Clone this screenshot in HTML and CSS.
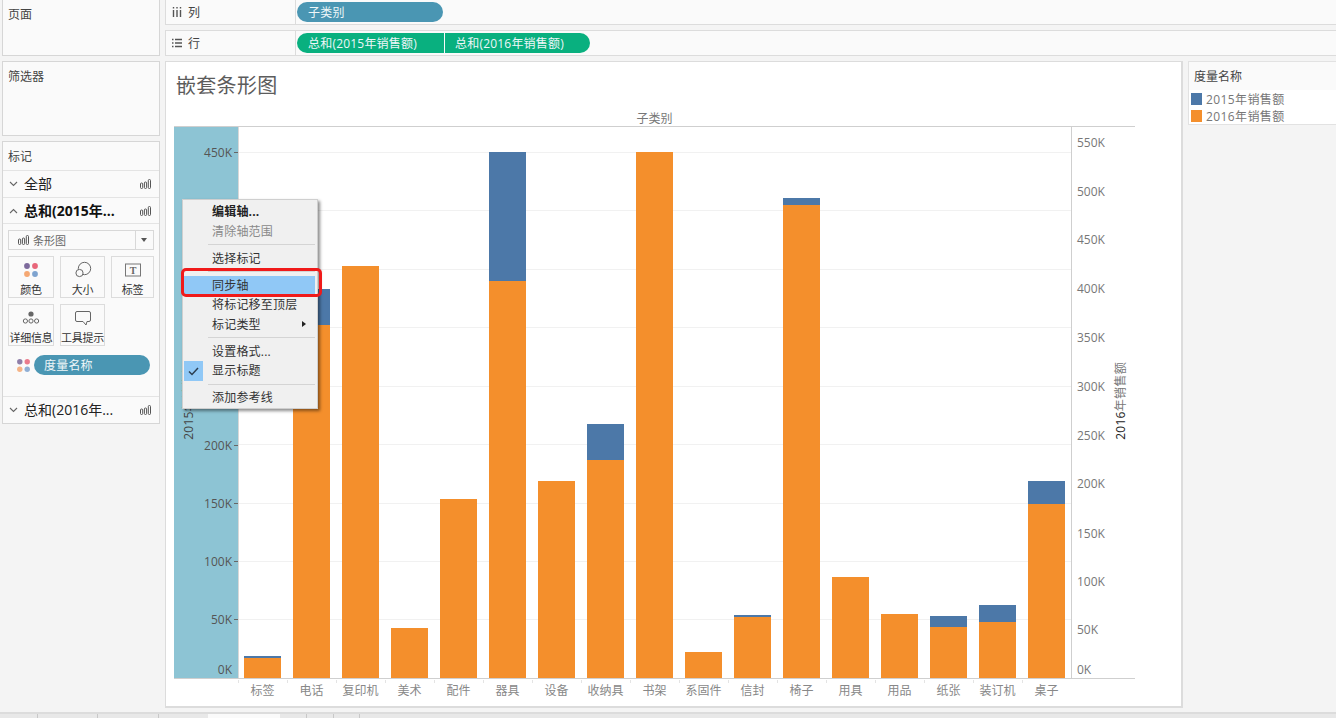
FILE: index.html
```html
<!DOCTYPE html>
<html lang="zh-CN">
<head>
<meta charset="utf-8">
<title>嵌套条形图</title>
<link rel="stylesheet" href="styles.css">
</head>
<body>
<svg class="defs" width="0" height="0" aria-hidden="true">
  <symbol id="mini-bars" viewBox="0 0 11 10">
    <rect x="0.5" y="4" width="2.2" height="5.500" rx="1" fill="none" stroke="#555"/>
    <rect x="4.4" y="3" width="2.2" height="6.500" rx="1" fill="none" stroke="#555"/>
    <rect x="8.300" y="0.500" width="2.200" height="9" rx="1" fill="none" stroke="#555"/>
  </symbol>
  <symbol id="dots" viewBox="0 0 14 14">
    <circle cx="3" cy="3" r="2.9" fill="#7d6a9c"/>
    <circle cx="11" cy="3" r="2.9" fill="#e8667a"/>
    <circle cx="3" cy="11" r="2.9" fill="#f5a873"/>
    <circle cx="11" cy="11" r="2.9" fill="#7ea3cf"/>
  </symbol>
  <symbol id="chev-down" viewBox="0 0 9 6"><path d="M1 1l3.500 3.500L8 1" fill="none" stroke="#666" stroke-width="1.100"/></symbol>
  <symbol id="chev-up" viewBox="0 0 9 6"><path d="M1 5l3.500-3.500L8 5" fill="none" stroke="#666" stroke-width="1.100"/></symbol>
</svg>

<div class="app">
  <div class="workspace">
    <aside class="sidebar">
      <section class="card card-pages"><h2 class="card-title">页面</h2></section>
      <section class="card card-filters"><h2 class="card-title">筛选器</h2></section>
      <section class="card card-marks">
        <h2 class="marks-title">标记</h2>
        <div class="marks-row">
          <svg class="chev"><use href="#chev-down"/></svg><span class="marks-name">全部</span>
          <svg class="mini"><use href="#mini-bars"/></svg>
        </div>
        <div class="marks-row marks-row-short">
          <svg class="chev"><use href="#chev-up"/></svg><span class="marks-name strong">总和(2015年...</span>
          <svg class="mini"><use href="#mini-bars"/></svg>
        </div>
        <div class="marks-body">
          <div class="type-select">
            <svg class="mini"><use href="#mini-bars"/></svg>
            <span class="type-label">条形图</span>
            <span class="type-arrow"></span>
          </div>
          <div class="mark-buttons">
            <div class="mark-btn">
              <svg class="mark-icon dots-icon"><use href="#dots"/></svg><span>颜色</span>
            </div>
            <div class="mark-btn">
              <svg class="mark-icon" viewBox="0 0 18 18"><circle cx="10.500" cy="7.500" r="6.200" fill="none" stroke="#666"/><circle cx="5.500" cy="12" r="3.600" fill="#fafafa" stroke="#666"/></svg><span>大小</span>
            </div>
            <div class="mark-btn">
              <svg class="mark-icon" viewBox="0 0 18 18"><rect x="1.500" y="3" width="15" height="12" fill="none" stroke="#777"/><text x="9" y="12.600" class="icon-t">T</text></svg><span>标签</span>
            </div>
            <div class="mark-btn">
              <svg class="mark-icon" viewBox="0 0 18 18"><circle cx="9" cy="5" r="2.600" fill="#666"/><circle cx="3.400" cy="12" r="2.100" fill="none" stroke="#666"/><circle cx="9" cy="12" r="2.100" fill="none" stroke="#666"/><circle cx="14.600" cy="12" r="2.100" fill="none" stroke="#666"/></svg><span>详细信息</span>
            </div>
            <div class="mark-btn">
              <svg class="mark-icon" viewBox="0 0 18 18"><path d="M3 2.500h12a1.500 1.500 0 0 1 1.500 1.500v7a1.500 1.500 0 0 1-1.500 1.500h-2l-1 3.500-3-3.500H3A1.500 1.500 0 0 1 1.500 11V4A1.500 1.500 0 0 1 3 2.500z" fill="none" stroke="#666"/></svg><span>工具提示</span>
            </div>
          </div>
          <div class="field-row">
            <svg class="field-dots"><use href="#dots"/></svg>
            <span class="pill pill-blue pill-field">度量名称</span>
          </div>
        </div>
        <div class="marks-row marks-last">
          <svg class="chev"><use href="#chev-down"/></svg><span class="marks-name">总和(2016年...</span>
          <svg class="mini"><use href="#mini-bars"/></svg>
        </div>
      </section>
    </aside>

    <main class="content">
      <div class="shelf shelf-cols">
        <div class="shelf-label">
          <svg class="shelf-icon" viewBox="0 0 10 10"><path d="M1.500 0v1.500M1.500 3v7M5 0v1.500M5 3v7M8.500 0v1.500M8.500 3v7" stroke="#555" stroke-width="1.400" fill="none"/></svg>
          <span>列</span>
        </div>
        <div class="pills"><span class="pill pill-blue pill-sub">子类别</span></div>
      </div>
      <div class="shelf shelf-rows">
        <div class="shelf-label">
          <svg class="shelf-icon" viewBox="0 0 10 10"><path d="M0 1.500h1.500M3 1.500h7M0 5h1.500M3 5h7M0 8.500h1.500M3 8.500h7" stroke="#555" stroke-width="1.400" fill="none"/></svg>
          <span>行</span>
        </div>
        <div class="pills">
          <span class="pill pill-green pill-left">总和(2015年销售额)</span>
          <span class="pill pill-green pill-right">总和(2016年销售额)</span>
        </div>
      </div>

      <div class="lower">
        <section class="sheet">
          <h1 class="sheet-title">嵌套条形图</h1>
          <div class="chart">
            <div class="chart-header">子类别</div>
            <div class="plot-row">
              <div class="axis axis-left">
                <span class="axis-title axis-title-left">2015年销售额</span>
                <span class="tick-left" style="top:17px">450K</span>
                <span class="tick-left" style="top:310px">200K</span>
                <span class="tick-left" style="top:368px">150K</span>
                <span class="tick-left" style="top:426px">100K</span>
                <span class="tick-left" style="top:484px">50K</span>
                <span class="tick-left tick-zero" style="top:534px">0K</span>
              </div>
              <div class="plot">
                <i class="grid" style="top:25px"></i><i class="grid" style="top:83px"></i>
                <i class="grid" style="top:142px"></i><i class="grid" style="top:200px"></i>
                <i class="grid" style="top:259px"></i><i class="grid" style="top:317px"></i>
                <i class="grid" style="top:376px"></i><i class="grid" style="top:434px"></i>
                <i class="grid" style="top:492px"></i>
                <div class="bars">
                  <div class="col"><b class="seg-blue" style="height:2px"></b><b class="seg-orange" style="height:20px"></b></div>
                  <div class="col"><b class="seg-blue" style="height:36px"></b><b class="seg-orange" style="height:353px"></b></div>
                  <div class="col"><b class="seg-orange" style="height:412px"></b></div>
                  <div class="col"><b class="seg-orange" style="height:50px"></b></div>
                  <div class="col"><b class="seg-orange" style="height:179px"></b></div>
                  <div class="col"><b class="seg-blue" style="height:129px"></b><b class="seg-orange" style="height:397px"></b></div>
                  <div class="col"><b class="seg-orange" style="height:197px"></b></div>
                  <div class="col"><b class="seg-blue" style="height:36px"></b><b class="seg-orange" style="height:218px"></b></div>
                  <div class="col"><b class="seg-orange" style="height:526px"></b></div>
                  <div class="col"><b class="seg-orange" style="height:26px"></b></div>
                  <div class="col"><b class="seg-blue" style="height:2px"></b><b class="seg-orange" style="height:61px"></b></div>
                  <div class="col"><b class="seg-blue" style="height:7px"></b><b class="seg-orange" style="height:473px"></b></div>
                  <div class="col"><b class="seg-orange" style="height:101px"></b></div>
                  <div class="col"><b class="seg-orange" style="height:64px"></b></div>
                  <div class="col"><b class="seg-blue" style="height:11px"></b><b class="seg-orange" style="height:51px"></b></div>
                  <div class="col"><b class="seg-blue" style="height:17px"></b><b class="seg-orange" style="height:56px"></b></div>
                  <div class="col"><b class="seg-blue" style="height:23px"></b><b class="seg-orange" style="height:174px"></b></div>
                </div>
              </div>
              <div class="axis axis-right">
                <span class="tick-right" style="top:7px">550K</span>
                <span class="tick-right" style="top:56px">500K</span>
                <span class="tick-right" style="top:104px">450K</span>
                <span class="tick-right" style="top:153px">400K</span>
                <span class="tick-right" style="top:202px">350K</span>
                <span class="tick-right" style="top:251px">300K</span>
                <span class="tick-right" style="top:300px">250K</span>
                <span class="tick-right" style="top:348px">200K</span>
                <span class="tick-right" style="top:398px">150K</span>
                <span class="tick-right" style="top:446px">100K</span>
                <span class="tick-right" style="top:494px">50K</span>
                <span class="tick-right" style="top:534px">0K</span>
                <span class="axis-title axis-title-right"><em>2016</em>年销售额</span>
              </div>
            </div>
            <div class="cats">
              <span>标签</span><span>电话</span><span>复印机</span><span>美术</span><span>配件</span><span>器具</span><span>设备</span><span>收纳具</span><span>书架</span><span>系固件</span><span>信封</span><span>椅子</span><span>用具</span><span>用品</span><span>纸张</span><span>装订机</span><span>桌子</span>
            </div>
          </div>

          <div class="menu">
            <div class="menu-item strong">编辑轴...</div>
            <div class="menu-item disabled">清除轴范围</div>
            <hr class="menu-sep">
            <div class="menu-item">选择标记</div>
            <hr class="menu-sep">
            <div class="menu-item active">同步轴</div>
            <div class="menu-item">将标记移至顶层</div>
            <div class="menu-item has-sub">标记类型</div>
            <hr class="menu-sep">
            <div class="menu-item">设置格式...</div>
            <div class="menu-item checked">
              <svg class="check" viewBox="0 0 19 20"><path d="M5 10.500l3 3 6-6.500" fill="none" stroke="#2c3e50" stroke-width="1.500"/></svg>显示标题
            </div>
            <hr class="menu-sep">
            <div class="menu-item">添加参考线</div>
          </div>
          <div class="callout"></div>
        </section>

        <aside class="legend">
          <h2 class="legend-title">度量名称</h2>
          <div class="legend-item"><i class="swatch swatch-blue"></i>2015年销售额</div>
          <div class="legend-item"><i class="swatch swatch-orange"></i>2016年销售额</div>
        </aside>
      </div>
    </main>
  </div>

  <footer class="tabs">
    <span class="tab tab-a"></span><span class="tab tab-b"></span><span class="tab tab-c"></span><span class="tab tab-d"></span>
    <span class="tab tab-active"></span>
    <span class="tab tab-e"></span><span class="tab tab-f"></span><span class="tab tab-g"></span>
  </footer>
</div>
</body>
</html>
```

FILE: styles.css
```css
* { box-sizing: border-box; }
html, body { margin: 0; padding: 0; }
body {
  width: 1336px;
  height: 718px;
  overflow: hidden;
  background: #f4f4f4;
  font-family: "Open Sans", "Noto Sans CJK SC", sans-serif;
  font-size: 12px;
  color: #444;
}
h1, h2 { margin: 0; font-weight: 400; }
.defs { position: absolute; }

.app { display: flex; flex-direction: column; height: 718px; }
.workspace { flex: 0 0 712px; display: flex; padding-left: 2px; gap: 5px; }

/* Sidebar */
.sidebar { width: 158px; display: flex; flex-direction: column; gap: 5px; }
.card { background: #fafafa; border: 1px solid #d6d6d6; }
.card-pages { height: 56px; border-top: 0; }
.card-filters { height: 75px; }
.card-marks { height: 283px; display: flex; flex-direction: column; }
.card-title { padding: 6px 5px; font-size: 12px; line-height: 18px; color: #444; }

.marks-title { flex: none; height: 29px; padding: 6px 5px 0; font-size: 12px; line-height: 18px; color: #444; border-bottom: 1px solid #e4e4e4; }
.marks-row { flex: none; height: 27px; display: flex; align-items: center; padding: 0 8px 0 6px; border-bottom: 1px solid #e4e4e4; }
.marks-row-short { height: 26px; }
.marks-row .chev { width: 9px; height: 6px; margin-right: 6px; }
.marks-name { flex: 1; font-size: 14px; line-height: 20px; margin-top: 1px; margin-bottom: 1px; color: #222; white-space: nowrap; }
.marks-name.strong { font-weight: 700; color: #111; }
.mini { width: 11px; height: 10px; flex: none; }
.marks-body { flex: none; height: 173px; padding: 6px 5px 0; border-bottom: 1px solid #e4e4e4; }
.marks-last { border-bottom: 0; height: 26px; }

.type-select { height: 20px; display: flex; align-items: center; border: 1px solid #d8d8d8; background: #fafafa; padding-left: 9px; color: #666; }
.type-select .mini { margin-right: 4px; }
.type-label { flex: 1; font-size: 11px; }
.type-arrow { width: 18px; height: 18px; border-left: 1px solid #d8d8d8; position: relative; }
.type-arrow::after { content: ""; position: absolute; left: 5px; top: 7px; border: 3.500px solid transparent; border-top: 4px solid #555; border-bottom: 0; }

.mark-buttons { display: grid; grid-template-columns: 46px 45px 43px; gap: 6px; margin-top: 6px; }
.mark-btn { height: 42px; border: 1px solid #dcdcdc; display: flex; flex-direction: column; align-items: center; font-size: 11px; line-height: 14px; color: #333; white-space: nowrap; letter-spacing: -0.2px; }
.mark-icon { width: 18px; height: 18px; margin: 4px 0 4px; flex: none; }
.dots-icon { width: 14px; height: 14px; margin: 6px 0 6px; }
.icon-t { font-family: "Liberation Serif", serif; font-size: 10px; font-weight: 700; text-anchor: middle; fill: #666; }

.field-row { display: flex; align-items: center; margin-top: 9px; }
.field-dots { width: 13px; height: 13px; margin: 0 4px 0 9px; opacity: .85; }

/* Pills */
.pill { display: flex; align-items: center; height: 20px; color: #eef6f8; font-size: 12px; letter-spacing: .2px; white-space: nowrap; }
.pill-blue { background: #4a96b3; border-radius: 10px; }
.pill-green { background: #09b07f; }
.pill-field { width: 116px; padding-left: 10px; }
.pill-sub { width: 146px; padding-left: 11px; }
.pill-left { width: 147px; padding-left: 11px; border-radius: 10px 0 0 10px; margin-right: 1px; }
.pill-right { width: 145px; padding-left: 10px; border-radius: 0 10px 10px 0; }

/* Shelves */
.content { flex: 1; min-width: 0; display: flex; flex-direction: column; }
.shelf { display: flex; background: #fafafa; border: 0 solid #dcdcdc; }
.shelf-cols { height: 25px; border-width: 0 0 1px 1px; margin-bottom: 5px; }
.shelf-rows { height: 26px; border-width: 1px 0 1px 1px; margin-bottom: 5px; }
.shelf-label { width: 130px; display: flex; align-items: center; gap: 6px; padding-left: 6px; border-right: 1px solid #dcdcdc; font-size: 12px; color: #444; }
.shelf-icon { width: 10px; height: 10px; }
.pills { display: flex; padding: 2px 0 0 1px; }

.lower { flex: 1; display: flex; gap: 5px; min-height: 0; }

/* Sheet */
.sheet { position: relative; flex: none; width: 1018px; height: 647px; background: #fff; border: 1px solid #dcdcdc; border-width: 1px 2px 2px 1px; padding: 0 0 0 8px; }
.sheet-title { height: 45px; padding: 10px 0 0 2px; font-size: 20px; line-height: 28px; color: #5c5c5c; letter-spacing: 0.3px; }
.chart { width: 961px; }
.chart-header { height: 19px; padding-left: 64px; width: 897px; text-align: center; font-size: 12px; line-height: 24px; color: #777; }
.plot-row { display: flex; height: 553px; border-top: 1px solid #cfcfcf; border-bottom: 1px solid #cfcfcf; }
.axis { position: relative; flex: none; width: 64px; }
.axis-left { background: #8dc4d4; }
.axis-right { border-left: 1px solid #cfcfcf; }
.tick-left, .tick-right { position: absolute; line-height: 17px; font-size: 12px; white-space: nowrap; }
.tick-left { right: 6px; color: #555; }
.tick-left::after { content: ""; position: absolute; left: 100%; top: 8px; margin-left: 2px; width: 4px; height: 1px; background: #666; }
.tick-zero::after { display: none; }
.tick-right { left: 5px; color: #777; }
.axis-title { position: absolute; top: 235px; font-size: 12px; line-height: 14px; letter-spacing: .3px; writing-mode: vertical-rl; text-orientation: sideways; transform: rotate(180deg); white-space: nowrap; }
.axis-title em { font-style: normal; color: #222; }
.axis-title-left { left: 8px; color: #444; }
.axis-title-right { left: 42px; color: #777; }

.plot { position: relative; flex: none; width: 833px; border-left: 1px solid #d8d8d8; }
.grid { position: absolute; left: 0; right: 0; height: 1px; background: #f1f1f1; }
.bars { position: absolute; inset: 0 0 0 -1px; display: flex; align-items: flex-end; }
.col { flex: 0 0 49px; display: flex; flex-direction: column; padding: 0 6px; }
.col b { display: block; }
.seg-blue { background: #4c78a8; }
.seg-orange { background: #f48f2c; }

.cats { display: flex; margin-left: 64px; width: 833px; }
.cats span { flex: 0 0 49px; text-align: center; font-size: 12px; line-height: 24px; color: #888; white-space: nowrap; position: relative; }
.cats span::before { content: ""; position: absolute; left: 0; top: 1px; width: 1px; height: 3px; background: #e4e4e4; }

/* Context menu */
.menu {
  position: absolute;
  left: 16px;
  top: 137px;
  width: 136px;
  height: 210px;
  padding: 2px 1px 0;
  background: #f0f0f0;
  border: 1px solid #cfcfcf;
  box-shadow: 2px 2px 3px rgba(0,0,0,.45);
  font-size: 12px;
  letter-spacing: .2px;
  color: #333;
}
.menu-item { height: 19.500px; line-height: 19.500px; padding-left: 28px; white-space: nowrap; position: relative; }
.menu-item.strong { font-weight: 700; color: #222; }
.menu-item.disabled { color: #8a8a8a; }
.menu-item.active { background: #90c8f6; margin-right: 1px; }
.menu-item.has-sub::after { content: ""; position: absolute; right: 10px; top: 6px; border: 3.500px solid transparent; border-left: 4px solid #222; border-right: 0; }
.menu-sep { height: 1px; border: 0; margin: 3px 1px 3.500px 24px; background: #d4d4d4; }
.check { position: absolute; left: 0; top: 0; width: 19px; height: 20px; background: #90c8f6; }

.callout { position: absolute; left: 15px; top: 206px; width: 141px; height: 29px; border: 3px solid #f01a1a; border-radius: 5px; pointer-events: none; }

/* Legend */
.legend { flex: none; width: 148px; height: 64px; background: #fff; border: 1px solid #e2e2e2; border-right: 0; }
.legend-title { height: 28px; padding: 6px 0 0 5px; background: #fafafa; font-size: 12px; line-height: 18px; color: #444; }
.legend-item { display: flex; align-items: center; height: 17px; padding-left: 2px; font-size: 12px; letter-spacing: .4px; color: #777; white-space: nowrap; }
.swatch { width: 11px; height: 12px; margin-right: 4px; }
.swatch-blue { background: #4c78a8; }
.swatch-orange { background: #f48f2c; }

/* Tabs */
.tabs { flex: 1; display: flex; background: #e8e8e8; border-top: 2px solid #dcdcdc; }
.tab { display: block; height: 100%; border-right: 1px solid #c8c8c8; }
.tab-a { width: 38px; }
.tab-b { width: 60px; }
.tab-c { width: 61px; }
.tab-d { width: 49px; border-right: 0; }
.tab-active { width: 72px; background: #fafafa; border-right: 0; }
.tab-e { width: 27px; }
.tab-f { width: 27px; }
.tab-g { width: 26px; }
```
